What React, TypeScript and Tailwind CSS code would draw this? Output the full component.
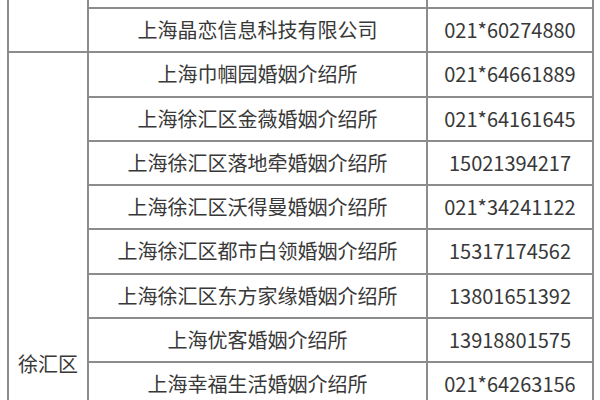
import React from "react";

const rows: [string, string][] = [
  ["", ""],
  ["上海晶恋信息科技有限公司", "021*60274880"],
  ["上海巾帼园婚姻介绍所", "021*64661889"],
  ["上海徐汇区金薇婚姻介绍所", "021*64161645"],
  ["上海徐汇区落地牵婚姻介绍所", "15021394217"],
  ["上海徐汇区沃得曼婚姻介绍所", "021*34241122"],
  ["上海徐汇区都市白领婚姻介绍所", "15317174562"],
  ["上海徐汇区东方家缘婚姻介绍所", "13801651392"],
  ["上海优客婚姻介绍所", "13918801575"],
  ["上海幸福生活婚姻介绍所", "021*64263156"],
];

export default function App() {
  return (
    <div
      className="h-[400px] w-[600px] overflow-hidden bg-white text-[20px] text-[#383838]"
      style={{ fontFamily: '"Noto Sans CJK SC", "Noto Sans", sans-serif' }}
    >
      <div className="ml-[7px] mt-[-35.25px] flex w-[587px] items-start border-l-2 border-[#8c8c8c]">
        <div className="flex w-[80px] shrink-0 flex-col border-r-2 border-[#8c8c8c]">
          <div className="h-[88.5px] border-b-2 border-[#8c8c8c]" />
          <div className="flex h-[619.5px] items-center justify-center border-b-2 border-[#8c8c8c] pt-[3px]">
            徐汇区
          </div>
        </div>
        <div className="flex flex-col">
          {rows.map(([name, phone], i) => (
            <div key={i} className="flex h-[44.25px] border-b-2 border-[#8c8c8c]">
              <div className="flex w-[339px] items-center justify-center border-r-2 border-[#8c8c8c] leading-none">
                {name}
              </div>
              <div className="flex w-[166px] items-center justify-center border-r-2 border-[#8c8c8c] leading-none">
                {phone}
              </div>
            </div>
          ))}
        </div>
      </div>
    </div>
  );
}
